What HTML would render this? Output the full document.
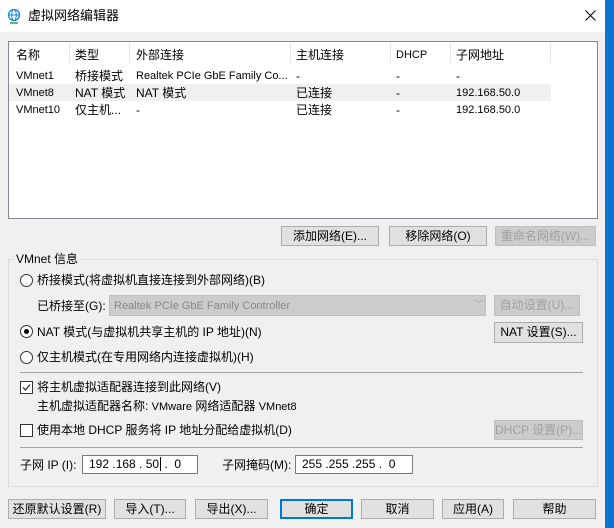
<!DOCTYPE html>
<html><head><meta charset="utf-8"><style>
*{box-sizing:border-box;margin:0;padding:0}
body{width:614px;height:528px;background:#0a74d0;position:relative;overflow:hidden;font-family:"Liberation Sans","Noto Sans CJK SC",sans-serif;font-size:12px;color:#000}
.win{position:absolute;left:0;top:0;width:605px;height:528px;background:#f0f0f0}
.title{position:absolute;left:0;top:0;width:605px;height:32px;background:#fff}
.a{position:absolute;white-space:nowrap;line-height:16px}
.btn{position:absolute;border:1px solid #adadad;background:#e1e1e1;text-align:center;line-height:18px;white-space:nowrap}
.dis{color:#a0a0a0;background:#ccc;border-color:#bfbfbf}
.radio{position:absolute;width:13px;height:13px;border:1px solid #333;border-radius:50%;background:#fff}
.chk{position:absolute;width:13px;height:13px;border:1px solid #333;background:#fff}
.inp{position:absolute;background:#fff;border:1px solid #7a7a7a;height:19px;line-height:17px;padding-left:6px}
</style></head><body>
<div class="win">
<div class="title">
<svg style="position:absolute;left:7px;top:8px" width="14" height="16" viewBox="0 0 14 16"><circle cx="7" cy="7" r="5.5" fill="none" stroke="#1a8bd0" stroke-width="1.3"/><ellipse cx="7" cy="7" rx="2.3" ry="5.5" fill="none" stroke="#1a8bd0" stroke-width="1"/><line x1="1.5" y1="7" x2="12.5" y2="7" stroke="#1a8bd0"/><line x1="3" y1="15" x2="11" y2="15" stroke="#2a9a5a" stroke-width="1.5"/></svg>
<div class="a" style="left:28px;top:8px;font-size:13px">虚拟网络编辑器</div>
<svg style="position:absolute;left:585px;top:10px" width="11" height="11"><path d="M0.5 0.5L10.5 10.5M10.5 0.5L0.5 10.5" stroke="#000" stroke-width="1"/></svg>
</div>
<div style="position:absolute;left:8px;top:41px;width:590px;height:178px;background:#fff;border:1px solid #828790"></div>
<div style="position:absolute;left:9px;top:84px;width:542px;height:17px;background:#f0f0f0"></div>
<div style="position:absolute;left:69px;top:43px;width:1px;height:20px;background:#e5e5e5"></div>
<div style="position:absolute;left:129px;top:43px;width:1px;height:20px;background:#e5e5e5"></div>
<div style="position:absolute;left:290px;top:43px;width:1px;height:20px;background:#e5e5e5"></div>
<div style="position:absolute;left:390px;top:43px;width:1px;height:20px;background:#e5e5e5"></div>
<div style="position:absolute;left:450px;top:43px;width:1px;height:20px;background:#e5e5e5"></div>
<div style="position:absolute;left:550px;top:43px;width:1px;height:20px;background:#e5e5e5"></div>
<div class="a" style="left:16px;top:47px">名称</div><div class="a" style="left:75px;top:47px">类型</div><div class="a" style="left:136px;top:47px">外部连接</div><div class="a" style="left:296px;top:47px">主机连接</div><div class="a" style="left:396px;top:47px;font-size:11px">DHCP</div><div class="a" style="left:456px;top:47px">子网地址</div>
<div class="a" style="left:16px;top:68px;font-size:11px">VMnet1</div><div class="a" style="left:75px;top:68px">桥接模式</div><div class="a" style="left:136px;top:68px;font-size:11px">Realtek PCIe GbE Family Co...</div><div class="a" style="left:296px;top:68px">-</div><div class="a" style="left:396px;top:68px">-</div><div class="a" style="left:456px;top:68px">-</div>
<div class="a" style="left:16px;top:85px;font-size:11px">VMnet8</div><div class="a" style="left:75px;top:85px">NAT 模式</div><div class="a" style="left:136px;top:85px">NAT 模式</div><div class="a" style="left:296px;top:85px">已连接</div><div class="a" style="left:396px;top:85px">-</div><div class="a" style="left:456px;top:85px;font-size:11px">192.168.50.0</div>
<div class="a" style="left:16px;top:102px;font-size:11px">VMnet10</div><div class="a" style="left:75px;top:102px">仅主机...</div><div class="a" style="left:136px;top:102px">-</div><div class="a" style="left:296px;top:102px">已连接</div><div class="a" style="left:396px;top:102px">-</div><div class="a" style="left:456px;top:102px;font-size:11px">192.168.50.0</div>

<div class="btn" style="left:281px;top:226px;width:98px;height:20px">添加网络(E)...</div>
<div class="btn" style="left:389px;top:226px;width:98px;height:20px">移除网络(O)</div>
<div class="btn dis" style="left:495px;top:226px;width:101px;height:20px">重命名网络(W)...</div>

<div style="position:absolute;left:8px;top:259px;width:590px;height:228px;border:1px solid #dcdcdc"></div>
<div class="a" style="left:14px;top:251px;background:#f0f0f0;padding:0 2px">VMnet 信息</div>
<div class="radio" style="left:20px;top:274px"></div><div class="a" style="left:37px;top:272px">桥接模式(将虚拟机直接连接到外部网络)(B)</div>
<div class="a" style="left:37px;top:298px">已桥接至(G):</div>
<div style="position:absolute;left:109px;top:295px;width:377px;height:21px;background:#ccc;border:1px solid #bfbfbf"></div>
<div class="a" style="left:114px;top:298px;color:#888;font-size:11px">Realtek PCIe GbE Family Controller</div>
<div class="a" style="left:474px;top:298px;color:#aaa;font-size:10px">﹀</div>
<div class="btn dis" style="left:494px;top:295px;width:86px;height:21px">自动设置(U)...</div>
<div class="radio" style="left:20px;top:325px"></div><div style="position:absolute;left:24px;top:329px;width:5px;height:5px;border-radius:50%;background:#000"></div>
<div class="a" style="left:37px;top:324px">NAT 模式(与虚拟机共享主机的 IP 地址)(N)</div>
<div class="btn" style="left:494px;top:322px;width:89px;height:21px">NAT 设置(S)...</div>
<div class="radio" style="left:20px;top:351px"></div><div class="a" style="left:37px;top:349px">仅主机模式(在专用网络内连接虚拟机)(H)</div>
<div style="position:absolute;left:20px;top:372px;width:563px;height:1px;background:#a0a0a0"></div>
<div class="chk" style="left:20px;top:381px"></div>
<svg style="position:absolute;left:21px;top:382px" width="11" height="11"><path d="M2 5.5L4.5 8L9 2.5" fill="none" stroke="#333" stroke-width="1.3"/></svg>
<div class="a" style="left:37px;top:379px">将主机虚拟适配器连接到此网络(V)</div>
<div class="a" style="left:37px;top:398px">主机虚拟适配器名称: <span style="font-size:11px">VMware</span> 网络适配器 <span style="font-size:11px">VMnet8</span></div>
<div class="chk" style="left:20px;top:424px"></div>
<div class="a" style="left:37px;top:422px">使用本地 DHCP 服务将 IP 地址分配给虚拟机(D)</div>
<div class="btn dis" style="left:494px;top:420px;width:89px;height:20px">DHCP 设置(P)...</div>
<div style="position:absolute;left:20px;top:447px;width:563px;height:1px;background:#a0a0a0"></div>
<div class="a" style="left:20px;top:457px">子网 IP (I):</div>
<div class="inp" style="left:82px;top:455px;width:116px">192 .168 . 50<span style="border-left:1px solid #000;margin-left:1px"></span> . &nbsp;0</div>
<div class="a" style="left:222px;top:457px">子网掩码(M):</div>
<div class="inp" style="left:295px;top:455px;width:118px">255 .255 .255 . &nbsp;0</div>

<div class="btn" style="left:8px;top:499px;width:98px;height:20px">还原默认设置(R)</div>
<div class="btn" style="left:114px;top:499px;width:72px;height:20px">导入(T)...</div>
<div class="btn" style="left:195px;top:499px;width:73px;height:20px">导出(X)...</div>
<div class="btn" style="left:280px;top:499px;width:73px;height:20px;border:2px solid #0078d7;line-height:16px">确定</div>
<div class="btn" style="left:361px;top:499px;width:73px;height:20px">取消</div>
<div class="btn" style="left:442px;top:499px;width:62px;height:20px">应用(A)</div>
<div class="btn" style="left:513px;top:499px;width:83px;height:20px">帮助</div>
</div>
</body></html>
